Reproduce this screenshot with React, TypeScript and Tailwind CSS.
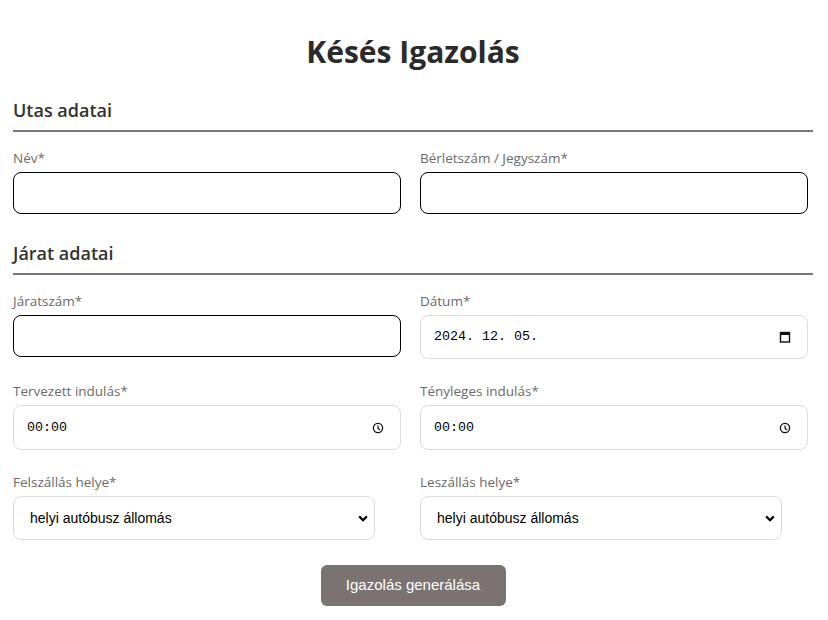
import React from "react";

const Label = ({ children }: { children: React.ReactNode }) => (
  <div className="h-5 text-[13.5px] leading-5 text-[#6b6b6b]">{children}</div>
);

const TextInput = () => (
  <input
    type="text"
    className="mt-1 block h-[42px] w-[388px] rounded-[8px] border border-black bg-white px-3 outline-none"
  />
);

const Calendar = () => (
  <svg width="12" height="12" viewBox="0 0 12 12">
    <rect x="1.5" y="1.5" width="9" height="9.5" fill="none" stroke="#111" strokeWidth="1.4" />
    <rect x="1" y="1" width="10" height="3" fill="#111" />
  </svg>
);

const Clock = () => (
  <svg width="12" height="12" viewBox="0 0 12 12">
    <circle cx="6" cy="6" r="4.6" fill="none" stroke="#111" strokeWidth="1.3" />
    <path d="M6 3.4V6.2L7.9 8" fill="none" stroke="#111" strokeWidth="1.2" />
  </svg>
);

const Chevron = () => (
  <svg width="10" height="7" viewBox="0 0 10 7">
    <path d="M1.2 1.4L5 5.2L8.8 1.4" fill="none" stroke="#000" strokeWidth="2.2" />
  </svg>
);

const FakeInput = ({ value, icon, tall }: { value: string; icon: React.ReactNode; tall?: boolean }) => (
  <div
    className={
      tall
        ? "mt-1 flex h-[45px] w-[388px] items-center justify-between rounded-[8px] border border-[#dcdcdc] bg-white pl-[13px] pr-[16px]"
        : "mt-1 flex h-[44px] w-[388px] items-center justify-between rounded-[8px] border border-[#dcdcdc] bg-white pl-[13px] pr-[16px]"
    }
  >
    <span className="font-['Liberation_Mono','DejaVu_Sans_Mono',monospace] text-[13.33px] text-black">
      {value}
    </span>
    {icon}
  </div>
);

const FakeSelect = () => (
  <div className="mt-1 flex h-[44px] w-[362px] items-center justify-between rounded-[8px] border border-[#dcdcdc] bg-white pl-[16px] pr-[6px]">
    <span className="font-['Liberation_Sans',Arial,sans-serif] text-[14px] text-black">
      helyi autóbusz állomás
    </span>
    <Chevron />
  </div>
);

const Section = ({ title }: { title: string }) => (
  <div className="border-b-2 border-[#777] pb-2">
    <h2 className="h-6 text-[18px] font-semibold leading-6 text-[#333]">{title}</h2>
  </div>
);

export default function App() {
  return (
    <div className="min-h-[620px] w-[828px] bg-white px-[13px] font-['Open_Sans','Noto_Sans',sans-serif]">
      <div className="w-[800px]">
        <h1 className="pt-[32px] text-center text-[30px] font-bold leading-10 text-[#2b2b2b]">
          Késés Igazolás
        </h1>
        <div className="mt-[26px]">
          <Section title="Utas adatai" />
        </div>
        <div className="mt-4 grid grid-cols-[388px_388px] gap-x-[19px]">
          <div>
            <Label>Név*</Label>
            <TextInput />
          </div>
          <div>
            <Label>Bérletszám / Jegyszám*</Label>
            <TextInput />
          </div>
        </div>
        <div className="mt-[27px]">
          <Section title="Járat adatai" />
        </div>
        <div className="mt-4 grid grid-cols-[388px_388px] gap-x-[19px] gap-y-[22px]">
          <div>
            <Label>Járatszám*</Label>
            <TextInput />
          </div>
          <div>
            <Label>Dátum*</Label>
            <FakeInput value="2024. 12. 05." icon={<Calendar />} />
          </div>
          <div>
            <Label>Tervezett indulás*</Label>
            <FakeInput value="00:00" icon={<Clock />} tall />
          </div>
          <div>
            <Label>Tényleges indulás*</Label>
            <FakeInput value="00:00" icon={<Clock />} tall />
          </div>
          <div>
            <Label>Felszállás helye*</Label>
            <FakeSelect />
          </div>
          <div>
            <Label>Leszállás helye*</Label>
            <FakeSelect />
          </div>
        </div>
        <div className="mt-[25px] flex justify-center">
          <button className="h-[41px] w-[185px] rounded-[6px] bg-[#7a7371] font-['Liberation_Sans',Arial,sans-serif] text-[15px] text-white">
            Igazolás generálása
          </button>
        </div>
      </div>
    </div>
  );
}
